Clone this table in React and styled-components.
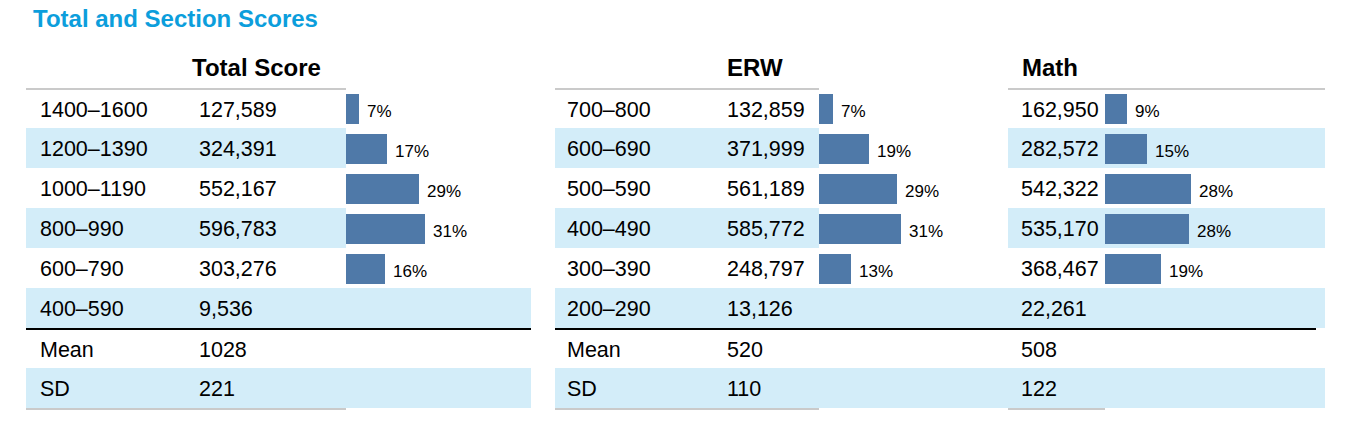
import React from 'react'
import styled, { createGlobalStyle } from 'styled-components'

const LIGHT = '#d3edf9'
const GRAY = '#cacaca'
const BAR = '#4f79a8'

const GlobalStyle = createGlobalStyle`
  body {
    margin: 0;
    background: #fff;
    color: #000;
    font-family: "Liberation Sans", Arial, sans-serif;
  }
`

const Page = styled.div`
  padding-top: 7px;
`

const Title = styled.h2`
  margin: 0 0 17px 33px;
  font-size: 24px;
  line-height: 24px;
  font-weight: 700;
  color: #0c9edc;
`

const Tables = styled.div`
  display: flex;
  align-items: flex-start;
  gap: 24px;
  padding-left: 26px;
`

const Table = styled.div`
  width: ${p => p.$width}px;
`

const Row = styled.div`
  display: grid;
  grid-template-columns: ${p => p.$cols};
  background: ${p => (p.$band ? LIGHT : 'transparent')};
`

const HeadCell = styled.div`
  grid-column: span ${p => p.$span};
  padding-left: ${p => p.$pad || 0}px;
  font-size: 24px;
  font-weight: 700;
  line-height: 40px;
  white-space: nowrap;
  border-bottom: 2px solid ${p => (p.$line ? GRAY : 'transparent')};
`

const Cell = styled.div`
  box-sizing: border-box;
  height: ${p => p.$h}px;
  padding: 2px 0 0 ${p => p.$pad || 0}px;
  line-height: ${p => p.$h - 2}px;
  font-size: 21.5px;
  white-space: nowrap;
  background: ${p => (p.$shade ? LIGHT : 'transparent')};
`

const BarCell = styled.div`
  box-sizing: border-box;
  height: ${p => p.$h}px;
  display: flex;
  align-items: flex-end;
  padding-bottom: 4px;
  background: ${p => (p.$shade ? LIGHT : 'transparent')};
`

const Bar = styled.div`
  height: 30px;
  background: ${BAR};
  flex: none;
`

const Pct = styled.span`
  margin-left: 8px;
  font-size: 17px;
  line-height: 24px;
  white-space: nowrap;
`

const Rule = styled.div`
  height: 2px;
  background: #000;
  margin-right: ${p => p.$trim || 0}px;
`

const FootCell = styled.div`
  grid-column: span ${p => p.$span};
  height: 2px;
  background: ${p => (p.$line ? GRAY : 'transparent')};
`

const TOTAL = {
  width: 505,
  cols: '173px 147px 185px',
  labelPad: 14,
  trim: 0,
  header: [
    { span: 2, pad: 166, text: 'Total Score', line: true },
    { span: 1 },
  ],
  footer: [{ span: 2, line: true }, { span: 1 }],
  groups: [{ pad: 0, shadeBar: false }],
  rows: [
    ['1400–1600', [['127,589', 13, '7%']]],
    ['1200–1390', [['324,391', 41, '17%']]],
    ['1000–1190', [['552,167', 73, '29%']]],
    ['800–990', [['596,783', 79, '31%']]],
    ['600–790', [['303,276', 39, '16%']]],
  ],
  summary: [
    ['400–590', ['9,536']],
    ['Mean', ['1028']],
    ['SD', ['221']],
  ],
}

const SECTIONS = {
  width: 770,
  cols: '172px 92px 189px 97px 220px',
  labelPad: 12,
  trim: 9,
  header: [
    { span: 2, pad: 172, text: 'ERW', line: true },
    { span: 1 },
    { span: 2, pad: 14, text: 'Math', line: true },
  ],
  footer: [{ span: 2, line: true }, { span: 1 }, { span: 1, line: true }, { span: 1 }],
  groups: [
    { pad: 0, shadeBar: false },
    { pad: 13, shadeBar: true },
  ],
  rows: [
    ['700–800', [['132,859', 14, '7%'], ['162,950', 22, '9%']]],
    ['600–690', [['371,999', 50, '19%'], ['282,572', 42, '15%']]],
    ['500–590', [['561,189', 78, '29%'], ['542,322', 86, '28%']]],
    ['400–490', [['585,772', 82, '31%'], ['535,170', 84, '28%']]],
    ['300–390', [['248,797', 32, '13%'], ['368,467', 56, '19%']]],
  ],
  summary: [
    ['200–290', ['13,126', '22,261']],
    ['Mean', ['520', '508']],
    ['SD', ['110', '122']],
  ],
}

const ScoreTable = ({ t }) => (
  <Table $width={t.width}>
    <Row $cols={t.cols}>
      {t.header.map((h, i) => (
        <HeadCell key={i} $span={h.span} $pad={h.pad} $line={h.line}>
          {h.text}
        </HeadCell>
      ))}
    </Row>

    {t.rows.map(([label, values], r) => {
      const h = r === 0 ? 38 : 40
      const shade = r % 2 === 1
      return (
        <Row key={label} $cols={t.cols}>
          <Cell $h={h} $pad={t.labelPad} $shade={shade}>{label}</Cell>
          {values.map(([count, w, pct], g) => (
            <React.Fragment key={g}>
              <Cell $h={h} $pad={t.groups[g].pad} $shade={shade}>{count}</Cell>
              <BarCell $h={h} $shade={shade && t.groups[g].shadeBar}>
                <Bar style={{ width: w }} />
                <Pct>{pct}</Pct>
              </BarCell>
            </React.Fragment>
          ))}
        </Row>
      )
    })}

    {t.summary.map(([label, values], r) => {
      const h = r === 1 ? 38 : 40
      return (
        <React.Fragment key={label}>
          <Row $cols={t.cols} $band={r !== 1}>
            <Cell $h={h} $pad={t.labelPad}>{label}</Cell>
            {values.map((v, g) => (
              <React.Fragment key={g}>
                <Cell $h={h} $pad={t.groups[g].pad}>{v}</Cell>
                <Cell $h={h} />
              </React.Fragment>
            ))}
          </Row>
          {r === 0 && <Rule $trim={t.trim} />}
        </React.Fragment>
      )
    })}

    <Row $cols={t.cols}>
      {t.footer.map((f, i) => (
        <FootCell key={i} $span={f.span} $line={f.line} />
      ))}
    </Row>
  </Table>
)

export default function App() {
  return (
    <Page>
      <GlobalStyle />
      <Title>Total and Section Scores</Title>
      <Tables>
        <ScoreTable t={TOTAL} />
        <ScoreTable t={SECTIONS} />
      </Tables>
    </Page>
  )
}
